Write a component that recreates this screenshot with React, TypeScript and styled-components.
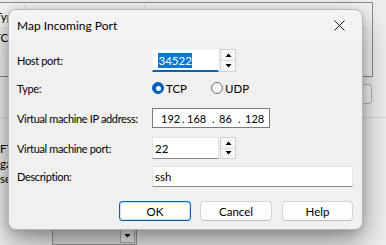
import React from "react";
import styled, { createGlobalStyle } from "styled-components";

const FONT = `Lato, "Noto Sans", sans-serif`;

const Global = createGlobalStyle`
  html, body { margin: 0; padding: 0; }
  body { width: 386px; height: 245px; overflow: hidden; background: #ececec; font-family: ${FONT}; }
  #root { width: 386px; height: 245px; }
`;

const Stage = styled.div`
  position: relative;
  width: 386px;
  height: 245px;
  overflow: hidden;
  background: #ededed;
  font-family: ${FONT};
  font-size: 11.5px;
  color: #000;
`;

/* ---------- window behind the dialog ---------- */
const BackWindow = styled.div`
  display: flex;
  flex-direction: column;
  width: 386px;
  height: 245px;
  background: #efefef;
`;

const ListBox = styled.div`
  margin: 2px 0 0 -12px;
  width: 385px;
  height: 80px;
  box-sizing: border-box;
  border: 1px solid #8a8a8a;
  background: #f4f4f4;
  display: flex;
  flex-direction: column;
`;

const ListHeader = styled.div`
  display: flex;
  height: 25px;
  border-bottom: 1px solid #e2e2e2;
`;

const HeaderCell = styled.div<{ $w: number }>`
  width: ${(p) => p.$w}px;
  box-sizing: border-box;
  border-right: 1px solid #dcdcdc;
  padding: 7px 0 0 6px;
`;

const ListRow = styled.div`
  height: 18px;
  padding: 0 0 0 5px;
  line-height: 18px;
`;

const BackButtonRow = styled.div`
  display: flex;
  justify-content: flex-end;
  padding-right: 14px;
  margin-top: 7px;
`;

const BackButton = styled.div`
  width: 80px;
  height: 20px;
  box-sizing: border-box;
  border: 1px solid #b4b4b4;
  border-radius: 3px;
  background: #f6f6f6;
`;

const Separator = styled.div`
  margin-top: 13px;
  height: 1px;
  background: #d6d6d6;
`;

const BackLines = styled.div`
  display: flex;
  flex-direction: column;
  padding: 23px 0 0 0;
`;

const BackLine = styled.div`
  height: 15px;
  line-height: 15px;
`;

const BackCombo = styled.div`
  margin: 41px 0 0 52px;
  width: 85px;
  height: 18px;
  box-sizing: border-box;
  border: 1px solid #9a9a9a;
  background: #e2e2e2;
  display: flex;
  justify-content: flex-end;
  padding: 1px;
`;

const BackComboArrow = styled.div`
  width: 13px;
  height: 12px;
  background: #f2f2f2;
  border: 1px solid #b0b0b0;
  display: flex;
  align-items: center;
  justify-content: center;
`;

/* ---------- dialog ---------- */
const Dialog = styled.div`
  position: absolute;
  left: 8px;
  top: 9px;
  width: 355px;
  height: 221px;
  box-sizing: border-box;
  border: 1px solid #b6b6b6;
  border-radius: 8px;
  background: #f0f0f0;
  box-shadow: 0 12px 30px rgba(0, 0, 0, 0.42), 0 2px 8px rgba(0, 0, 0, 0.14);
  display: flex;
  flex-direction: column;
  overflow: hidden;
`;

const TitleBar = styled.div`
  display: flex;
  align-items: center;
  height: 30px;
  padding-left: 8px;
  background: #f3f3f3;
`;

const TitleText = styled.div`
  flex: 1;
  font-size: 12px;
  padding-top: 1px;
`;

const CloseButton = styled.div`
  width: 46px;
  height: 30px;
  display: flex;
  align-items: center;
  justify-content: center;
  padding-top: 1px;
  box-sizing: border-box;
`;

const Body = styled.div`
  display: flex;
  flex-direction: column;
  padding: 9px 9px 0 8px;
`;

const Row = styled.div<{ $h: number; $mt: number }>`
  display: grid;
  grid-template-columns: 135px 1fr;
  align-items: center;
  height: ${(p) => p.$h}px;
  margin-top: ${(p) => p.$mt}px;
`;

const Label = styled.div`
  white-space: nowrap;
  font-size: 11px;
  letter-spacing: -0.35px;
`;

const SpinGroup = styled.div`
  display: flex;
  height: 100%;
  align-items: stretch;
`;

const EditBox = styled.div<{ $w?: number; $focus?: boolean; $pl?: number }>`
  width: ${(p) => (p.$w ? `${p.$w}px` : "auto")};
  flex: ${(p) => (p.$w ? "none" : "1")};
  height: 100%;
  box-sizing: border-box;
  background: #fff;
  border: 1px solid ${(p) => (p.$focus ? "#f6f6f6" : "#e4e4e4")};
  border-bottom: ${(p) => (p.$focus ? "2px solid #0063b1" : "1px solid #8a8a8a")};
  padding-left: ${(p) => p.$pl ?? 2}px;
  display: flex;
  align-items: center;
  white-space: nowrap;
`;

const Selected = styled.span`
  background: #0078d7;
  color: #fff;
  line-height: 15px;
  padding: 0 0.5px;
`;

const Spinner = styled.div`
  width: 16px;
  margin-left: 1px;
  display: flex;
  flex-direction: column;
  box-sizing: border-box;
  border: 1px solid #d0d0d0;
  background: #f0f0f0;
`;

const SpinHalf = styled.div<{ $top?: boolean }>`
  flex: 1;
  display: flex;
  align-items: center;
  justify-content: center;
  border-bottom: ${(p) => (p.$top ? "1px solid #d6d6d6" : "none")};
  background: #f7f7f7;
`;

const RadioGroup = styled.div`
  display: flex;
  align-items: center;
`;

const RadioItem = styled.div<{ $w?: number }>`
  display: flex;
  align-items: center;
  width: ${(p) => (p.$w ? `${p.$w}px` : "auto")};
  gap: 2px;
`;

const RadioCircle = styled.div<{ $on?: boolean }>`
  width: 12px;
  height: 12px;
  box-sizing: border-box;
  border-radius: 50%;
  background: ${(p) => (p.$on ? "#005fb8" : "#f6f6f6")};
  border: 1px solid ${(p) => (p.$on ? "#005fb8" : "#6f6f6f")};
  display: flex;
  align-items: center;
  justify-content: center;
`;

const RadioDot = styled.div`
  width: 5px;
  height: 5px;
  border-radius: 50%;
  background: #fff;
`;

const IpBox = styled.div`
  width: 118px;
  height: 20px;
  box-sizing: border-box;
  background: #fff;
  border: 1px solid #7a7a7a;
  display: flex;
  align-items: center;
  padding-left: 8px;
  font-size: 11px;
`;

const IpPart = styled.span<{ $w: number }>`
  display: inline-block;
  width: ${(p) => p.$w}px;
`;

const ButtonRow = styled.div`
  display: grid;
  grid-template-columns: 72px 72px 72px;
  column-gap: 9px;
  justify-content: end;
  height: 20px;
  margin-top: 14px;
`;

const Button = styled.div<{ $default?: boolean }>`
  box-sizing: border-box;
  height: 20px;
  border-radius: 4px;
  background: #fdfdfd;
  border: 1px solid ${(p) => (p.$default ? "#0067c0" : "#d3d3d3")};
  border-bottom-color: ${(p) => (p.$default ? "#0058a8" : "#bdbdbd")};
  box-shadow: ${(p) => (p.$default ? "inset 0 0 0 1px #cfe0f3" : "none")};
  display: flex;
  align-items: center;
  justify-content: center;
  &:last-child { margin-left: 1px; }
`;

const UpArrow = () => (
  <svg width="7" height="4" viewBox="0 0 7 4"><path d="M0.5 4 L3.5 0.5 L6.5 4 Z" fill="#000" /></svg>
);
const DownArrow = () => (
  <svg width="7" height="4" viewBox="0 0 7 4"><path d="M0.5 0 L3.5 3.5 L6.5 0 Z" fill="#000" /></svg>
);

const Spin = () => (
  <Spinner>
    <SpinHalf $top><UpArrow /></SpinHalf>
    <SpinHalf><DownArrow /></SpinHalf>
  </Spinner>
);

export default function App() {
  return (
    <>
      <Global />
      <Stage>
        <BackWindow>
          <ListBox>
            <ListHeader>
              <HeaderCell $w={37}>Type</HeaderCell>
              <HeaderCell $w={120} />
            </ListHeader>
            <ListRow>TCP</ListRow>
          </ListBox>
          <BackButtonRow>
            <BackButton />
          </BackButtonRow>
          <Separator />
          <BackLines>
            <BackLine>FTP</BackLine>
            <BackLine>gateway</BackLine>
            <BackLine>server</BackLine>
          </BackLines>
          <BackCombo>
            <BackComboArrow><DownArrow /></BackComboArrow>
          </BackCombo>
        </BackWindow>

        <Dialog>
          <TitleBar>
            <TitleText>Map Incoming Port</TitleText>
            <CloseButton>
              <svg width="11" height="11" viewBox="0 0 11 11">
                <path d="M0.5 0.5 L10.5 10.5 M10.5 0.5 L0.5 10.5" stroke="#1b1b1b" strokeWidth="1" />
              </svg>
            </CloseButton>
          </TitleBar>
          <Body>
            <Row $h={23} $mt={0}>
              <Label>Host port:</Label>
              <SpinGroup>
                <EditBox $w={67} $focus $pl={5}><Selected>34522</Selected></EditBox>
                <Spin />
              </SpinGroup>
            </Row>
            <Row $h={20} $mt={6}>
              <Label>Type:</Label>
              <RadioGroup>
                <RadioItem $w={59}>
                  <RadioCircle $on><RadioDot /></RadioCircle>
                  <span>TCP</span>
                </RadioItem>
                <RadioItem>
                  <RadioCircle />
                  <span>UDP</span>
                </RadioItem>
              </RadioGroup>
            </Row>
            <Row $h={20} $mt={10}>
              <Label>Virtual machine IP address:</Label>
              <IpBox>
                <IpPart $w={21}>192</IpPart>
                <IpPart $w={5}>.</IpPart>
                <IpPart $w={25}>168</IpPart>
                <IpPart $w={7}>.</IpPart>
                <IpPart $w={19}>86</IpPart>
                <IpPart $w={7}>.</IpPart>
                <IpPart $w={24}>128</IpPart>
              </IpBox>
            </Row>
            <Row $h={22} $mt={9}>
              <Label>Virtual machine port:</Label>
              <SpinGroup>
                <EditBox $w={67} $pl={2}>22</EditBox>
                <Spin />
              </SpinGroup>
            </Row>
            <Row $h={21} $mt={7}>
              <Label>Description:</Label>
              <EditBox $pl={2}>ssh</EditBox>
            </Row>
            <ButtonRow>
              <Button $default>OK</Button>
              <Button>Cancel</Button>
              <Button>Help</Button>
            </ButtonRow>
          </Body>
        </Dialog>
      </Stage>
    </>
  );
}
